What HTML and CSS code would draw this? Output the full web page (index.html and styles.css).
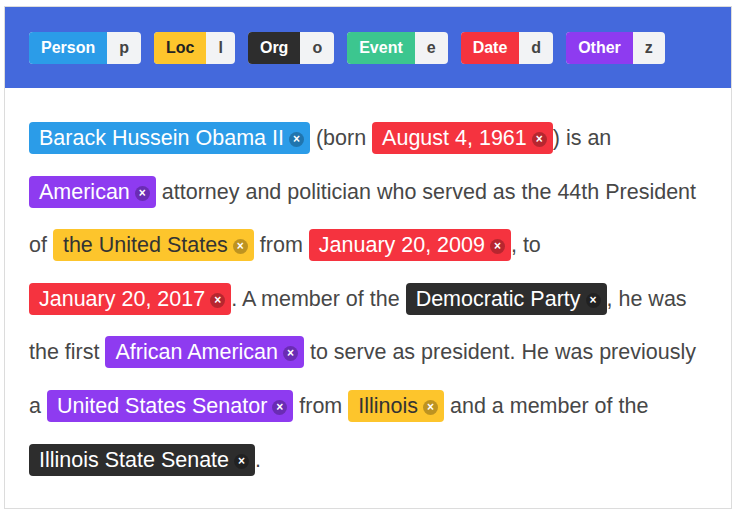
FILE: index.html
```html
<!DOCTYPE html>
<html lang="en">
<head>
    <meta charset="UTF-8">
    <title>Entity Tagger</title>
    <link rel="stylesheet" href="styles.css">
</head>
<body>
    <div class="tagger">
        <div class="toolbar">
            <span class="label-key person"><span class="name">Person</span><span class="key">p</span></span>
            <span class="label-key loc"><span class="name">Loc</span><span class="key">l</span></span>
            <span class="label-key org"><span class="name">Org</span><span class="key">o</span></span>
            <span class="label-key event"><span class="name">Event</span><span class="key">e</span></span>
            <span class="label-key date"><span class="name">Date</span><span class="key">d</span></span>
            <span class="label-key other"><span class="name">Other</span><span class="key">z</span></span>
        </div>
        <div class="text-body">
            <span class="tag person">Barack Hussein Obama II<span class="remove">×</span></span> (born <span class="tag date">August 4, 1961<span class="remove">×</span></span>) is an
            <span class="tag other">American<span class="remove">×</span></span> attorney and politician who served as the 44th President
            of <span class="tag loc">the United States<span class="remove">×</span></span> from <span class="tag date">January 20, 2009<span class="remove">×</span></span>, to
            <span class="tag date">January 20, 2017<span class="remove">×</span></span>. A member of the <span class="tag org">Democratic Party<span class="remove">×</span></span>, he was
            the first <span class="tag other">African American<span class="remove">×</span></span> to serve as president. He was previously
            a <span class="tag other">United States Senator<span class="remove">×</span></span> from <span class="tag loc">Illinois<span class="remove">×</span></span> and a member of the
            <span class="tag org">Illinois State Senate<span class="remove">×</span></span>.
        </div>
    </div>
</body>
</html>
```

FILE: styles.css
```css
* {
    margin: 0;
    padding: 0;
    box-sizing: border-box;
    font-family: "Liberation Sans", Arial, sans-serif;
}

body {
    background-color: #ffffff;
    padding: 6px 4px 4px 4px;
}

/* Card */
.tagger {
    border: 1px solid #dcdcdc;
    background-color: #ffffff;
    height: 503px;
}

/* Label toolbar */
.toolbar {
    background-color: #4469dc;
    height: 81px;
    display: flex;
    align-items: center;
    gap: 13px;
    padding: 0 24px;
}

.label-key {
    display: flex;
    height: 32px;
    border-radius: 4px;
    overflow: hidden;
    font-size: 16px;
    font-weight: bold;
    background-color: #f2f3f5;
}

.label-key .name {
    color: #ffffff;
    padding: 0 12px;
    line-height: 32px;
}

.label-key .key {
    color: #444444;
    padding: 0 12px;
    line-height: 32px;
}

.label-key.loc .name {
    color: #222222;
}

/* Entity colours */
.tag.person, .label-key.person .name { background-color: #2b9ce8; }
.tag.loc, .label-key.loc .name { background-color: #fdc52c; }
.tag.org, .label-key.org .name { background-color: #2d2d2d; }
.tag.event, .label-key.event .name { background-color: #3cc68f; }
.tag.date, .label-key.date .name { background-color: #f5333f; }
.tag.other, .label-key.other .name { background-color: #8e3bf0; }

/* Annotated text */
.text-body {
    padding: 24px 24px 0 24px;
    font-size: 21.5px;
    line-height: 53.6px;
    color: #474747;
}

.tag {
    display: inline-block;
    line-height: 32px;
    height: 32px;
    padding: 0 6px 0 10px;
    border-radius: 4px;
    color: #ffffff;
}

.tag.loc {
    color: #333333;
}

.remove {
    display: inline-block;
    width: 15px;
    height: 15px;
    margin-left: 5px;
    border-radius: 50%;
    background-color: rgba(0, 0, 0, 0.25);
    color: #ffffff;
    font-size: 12px;
    font-weight: bold;
    line-height: 15px;
    text-align: center;
    vertical-align: 2px;
}
```
